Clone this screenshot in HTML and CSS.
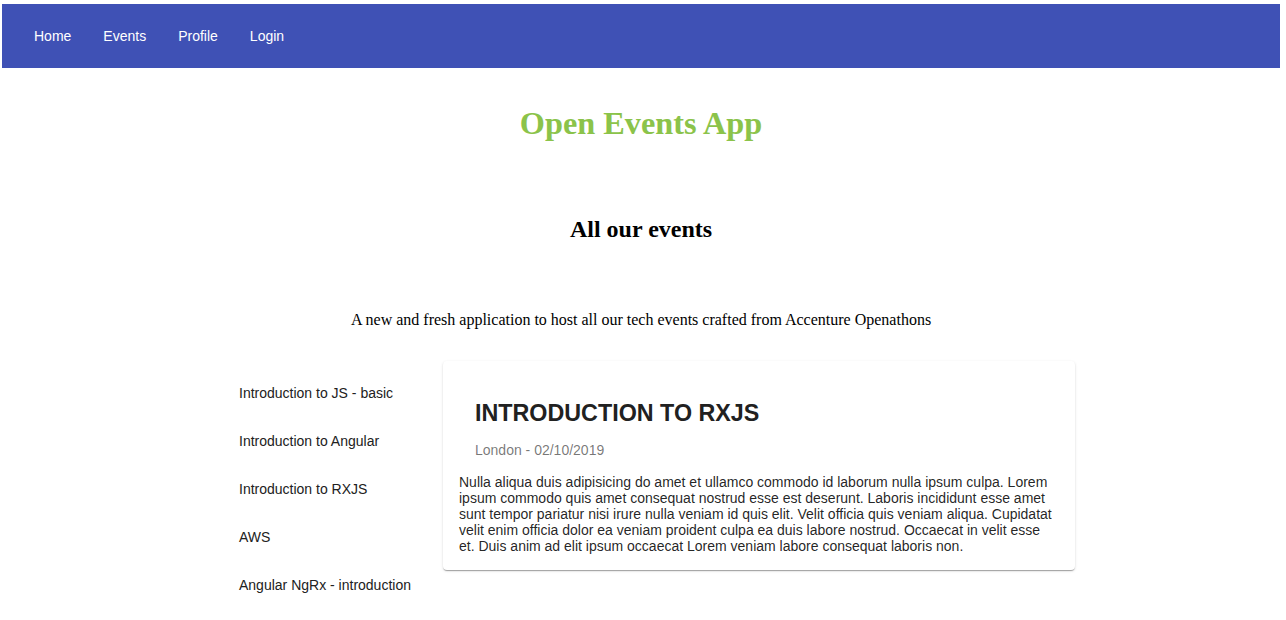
FILE: index.html
```html
<!DOCTYPE html>
<html lang="en">
<head>
<meta charset="utf-8">
<title>Open Events App</title>
<link rel="stylesheet" href="styles.css">
</head>
<body>
<header class="toolbar">
  <nav class="nav">
    <a class="nav-btn" href="#">Home</a>
    <a class="nav-btn" href="#">Events</a>
    <a class="nav-btn" href="#">Profile</a>
    <a class="nav-btn" href="#">Login</a>
  </nav>
</header>
<main>
  <h1 class="app-title">Open Events App</h1>
  <h2 class="section-title">All our events</h2>
  <p class="intro">A new and fresh application to host all our tech events crafted from Accenture Openathons</p>
  <div class="events">
    <ul class="event-list">
      <li class="event-item">Introduction to JS - basic</li>
      <li class="event-item">Introduction to Angular</li>
      <li class="event-item">Introduction to RXJS</li>
      <li class="event-item">AWS</li>
      <li class="event-item">Angular NgRx - introduction</li>
    </ul>
    <article class="card">
      <div class="card-header">
        <div class="card-title">INTRODUCTION TO RXJS</div>
        <div class="card-subtitle">London - 02/10/2019</div>
      </div>
      <p class="card-content">Nulla aliqua duis adipisicing do amet et ullamco commodo id laborum nulla ipsum culpa. Lorem ipsum commodo quis amet consequat nostrud esse est deserunt. Laboris incididunt esse amet sunt tempor pariatur nisi irure nulla veniam id quis elit. Velit officia quis veniam aliqua. Cupidatat velit enim officia dolor ea veniam proident culpa ea duis labore nostrud. Occaecat in velit esse et. Duis anim ad elit ipsum occaecat Lorem veniam labore consequat laboris non.</p>
    </article>
  </div>
</main>
</body>
</html>
```

FILE: styles.css
```css
html, body {
  background: #fff;
}
body {
  margin: 4px 6px 0 2px;
  font-family: "Liberation Serif", "Times New Roman", serif;
  color: #000;
}
.toolbar {
  height: 64px;
  background: #3f51b5;
  display: flex;
  align-items: center;
  padding: 0 16px;
}
.nav {
  display: flex;
}
.nav-btn {
  display: block;
  min-width: 64px;
  padding: 0 16px;
  box-sizing: border-box;
  line-height: 36px;
  text-align: center;
  color: #fff;
  text-decoration: none;
  font-family: "Liberation Sans", Arial, sans-serif;
  font-size: 14px;
}
main {
  display: flex;
  flex-direction: column;
  align-items: center;
}
.app-title {
  margin: 37px 0 0;
  font-size: 32.3px;
  line-height: 37px;
  font-weight: bold;
  color: #8bc34a;
  text-align: center;
}
.section-title {
  margin: 73px 0 0;
  font-size: 24px;
  line-height: 28px;
  font-weight: bold;
  text-align: center;
}
.intro {
  margin: 68px 0 0;
  font-size: 16px;
  line-height: 18px;
  text-align: center;
}
.events {
  align-self: flex-start;
  margin: 32px 0 0 221px;
  display: flex;
  align-items: flex-start;
  font-family: "Liberation Sans", Arial, sans-serif;
}
.event-list {
  list-style: none;
  margin: 8px 0 0;
  padding: 0;
  width: 220px;
}
.event-item {
  height: 48px;
  line-height: 48px;
  padding: 0 16px;
  font-size: 14px;
  color: #212121;
  white-space: nowrap;
}
.card {
  width: 632px;
  box-sizing: border-box;
  padding: 16px;
  border-radius: 4px;
  background: #fff;
  box-shadow: 0 2px 1px -1px rgba(0,0,0,.2), 0 1px 1px 0 rgba(0,0,0,.14), 0 1px 3px 0 rgba(0,0,0,.12);
  color: rgba(0,0,0,.87);
}
.card-header {
  padding: 20px 16px 0;
}
.card-title {
  font-size: 23.3px;
  line-height: 32px;
  font-weight: bold;
  color: #212121;
}
.card-subtitle {
  margin-top: 11px;
  font-size: 14px;
  line-height: 20px;
  color: rgba(0,0,0,.54);
}
.card-content {
  margin: 14px 0 0;
  font-size: 14px;
  line-height: 16px;
}
```
